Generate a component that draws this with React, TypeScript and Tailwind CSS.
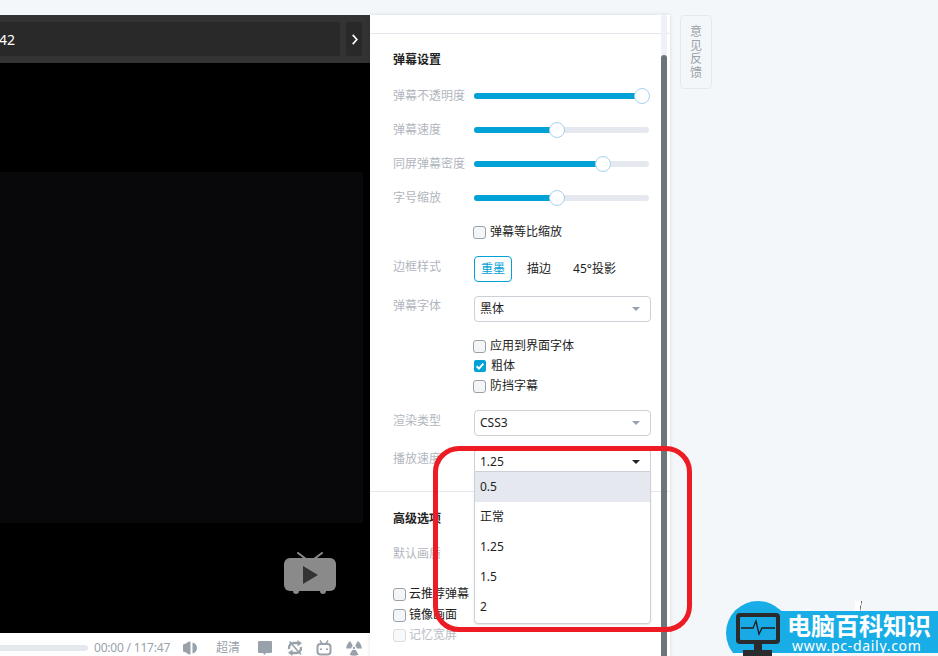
import React from "react";

const font = { fontFamily: '"Noto Sans","Noto Sans CJK SC",sans-serif' };

function Slider({ label, pct }: { label: string; pct: number }) {
  return (
    <div className="flex h-[34px] items-center">
      <span className="w-[81px] shrink-0 text-[12px] text-[#b1b6be]">{label}</span>
      <div className="relative h-[6px] w-[175px] shrink-0 rounded-full bg-[#e5e9ef]">
        <div className="h-full rounded-full bg-[#00a1d6]" style={{ width: `${pct}%` }} />
        <div
          className="absolute top-[-5px] ml-[-8px] h-[16px] w-[16px] rounded-full border border-[#a5d4ec] bg-white"
          style={{ left: `${pct}%` }}
        />
      </div>
    </div>
  );
}

function Check({ label, checked, muted, tight }: { label: string; checked?: boolean; muted?: boolean; tight?: boolean }) {
  return (
    <div className={tight ? "flex h-[20px] items-center gap-[3px]" : "flex h-[20px] items-center gap-[4px]"}>
      <span
        className={
          checked
            ? "ml-px mr-px flex h-[12px] w-[12px] items-center justify-center rounded-[2px] bg-[#00a1d6]"
            : muted
              ? "h-[13px] w-[13px] rounded-[3px] border border-[#d9dce1] bg-[#f8f9fa]"
              : "h-[13px] w-[13px] rounded-[3px] border border-[#99a2aa] bg-[#f4f5f7]"
        }
      >
        {checked && (
          <svg viewBox="0 0 12 12" className="h-[12px] w-[12px]">
            <path d="M2.6 6.2 5 8.6 9.4 3.6" fill="none" stroke="#fff" strokeWidth="2" />
          </svg>
        )}
      </span>
      <span className={muted ? "text-[12px] text-[#b9bdc3]" : "text-[12px] text-[#222]"}>{label}</span>
    </div>
  );
}

function Select({ label, value }: { label: string; value: string }) {
  return (
    <div className="mt-[14px] flex items-start">
      <span className="mt-px h-[18px] w-[81px] shrink-0 text-[12px] leading-[18px] text-[#b1b6be]">{label}</span>
      <div className="flex h-[26px] w-[177px] shrink-0 items-center justify-between rounded-[4px] border border-[#ccd0d7] pl-[5px] pr-[10px] text-[12px] text-[#222]">
        <span>{value}</span>
        <span className="h-0 w-0 border-x-[4px] border-t-[4px] border-x-transparent border-t-[#99a2aa]" />
      </div>
    </div>
  );
}

function TvLogo() {
  return (
    <svg viewBox="0 0 52 42" className="h-[42px] w-[52px]">
      <path d="M14 1 22 7M38 1 30 7" stroke="#8a8a8a" strokeWidth="2" strokeLinecap="round" />
      <rect x="0" y="6" width="52" height="33" rx="6" fill="#8a8a8a" />
      <circle cx="12" cy="39" r="3" fill="#8a8a8a" />
      <circle cx="39" cy="39" r="3" fill="#8a8a8a" />
      <path d="M19 14 34 23 19 32Z" fill="#333" />
    </svg>
  );
}

function Controls() {
  return (
    <div className="flex h-[23px] items-center bg-white pt-[6px] text-[12px] text-[#99a2aa]">
      <div className="h-[6px] w-[88px] rounded-r-full bg-[#e5e9ef]" />
      <span className="ml-[6px] w-[80px] whitespace-nowrap tracking-[-0.2px]">00:00 / 117:47</span>
      <svg viewBox="0 0 16 16" className="ml-[8px] h-[16px] w-[16px]" fill="#99a2aa">
        <path d="M8.500 1.500V14.500C5 14.500 4.500 12 2.500 12 1.500 12 1 11.500 1 10.500V5.500C1 4.500 1.500 4 2.500 4 4.500 4 5 1.500 8.500 1.500Z" />
        <path d="M10.500 2.500C13.500 3 15 5.500 15 8S13.500 13 10.500 13.500Z" />
      </svg>
      <span className="ml-[18px]">超清</span>
      <svg viewBox="0 0 16 16" className="ml-[17px] h-[16px] w-[16px]">
        <path d="M2 1h12a1 1 0 0 1 1 1v10a1 1 0 0 1-1 1H9l-1.500 2L6 13H2a1 1 0 0 1-1-1V2a1 1 0 0 1 1-1Z" fill="#99a2aa" />
      </svg>
      <svg viewBox="0 0 16 16" className="ml-[14px] h-[16px] w-[16px]" fill="none" stroke="#99a2aa">
        <path d="M2 9C1.500 5 4 3 7 3H11" strokeWidth="2.400" />
        <path d="M10.500 0 15 3.200 10.500 6.500Z" fill="#99a2aa" stroke="none" />
        <path d="M14 7C14.500 11 12 13 9 13H5" strokeWidth="2.400" />
        <path d="M5.500 9.500 1 12.800 5.500 16Z" fill="#99a2aa" stroke="none" />
        <path d="M2.500 1.500 14 14.500" strokeWidth="1.600" />
      </svg>
      <svg viewBox="0 0 16 16" className="ml-[13px] h-[16px] w-[16px]" fill="none" stroke="#99a2aa" strokeWidth="2">
        <rect x="1.500" y="4" width="13" height="10.500" rx="3" />
        <path d="M4 0.500 6 3.500M12 0.500 10 3.500" strokeWidth="1.500" />
        <path d="M5 8.500v1.500M11 8.500v1.500" strokeWidth="2" />
      </svg>
      <svg viewBox="0 0 16 16" className="ml-[14px] h-[16px] w-[16px]" fill="#99a2aa">
        <path d="M4.200 1 6.800 5.800 4.800 8.500H0.200C0.200 5.500 1.800 2.500 4.200 1Z" />
        <path d="M11.800 1 9.200 5.800 11.200 8.500H15.800C15.800 5.500 14.200 2.500 11.800 1Z" />
        <path d="M6.200 10 9.800 10 12.500 14.800C10 16.200 6 16.200 3.500 14.800Z" />
        <circle cx="8" cy="8" r="1.200" />
      </svg>
    </div>
  );
}

function Brand() {
  return (
    <div className="absolute left-[726px] top-[601px] h-[55px] w-[212px]">
      <div className="absolute left-0 top-0 h-[64px] w-[64px] rounded-full bg-[#18ade6] [clip-path:inset(0_0_12px_0)]" />
      <div className="absolute left-[32px] right-0 top-[10px] h-[42px] bg-[#18ade6]" />
      <svg viewBox="0 0 44 43" className="absolute left-[10px] top-[12px] h-[43px] w-[44px]">
        <rect x="0" y="0" width="44" height="31" rx="4" fill="#2b2a2c" />
        <rect x="4" y="4" width="36" height="23" rx="1" fill="#19a9e5" />
        <path d="M5 15h12l3-7 3 13 3-6h13" fill="none" stroke="#1c1c1e" strokeWidth="1.300" />
        <rect x="18" y="31" width="8" height="6" fill="#2b2a2c" />
        <rect x="7" y="37" width="29" height="6" fill="#2b2a2c" />
      </svg>
      <div className="absolute left-[61px] top-[9px] whitespace-nowrap text-[24px] font-bold leading-[32px] text-white">
        电脑百科知识
      </div>
      <div className="absolute left-[66px] top-[38px] whitespace-nowrap text-[14px] leading-[13px] tracking-[0.7px] text-white">
        www.pc-daily.com
      </div>
    </div>
  );
}

export default function App() {
  return (
    <div className="relative flex h-[656px] w-[938px] overflow-hidden bg-[#f4f7f9] pt-[15px]" style={font}>
      <div className="flex w-[370px] shrink-0 flex-col">
        <div className="flex h-[48px] items-center gap-[6px] bg-[#333] pr-[8px]">
          <div className="flex h-[34px] flex-1 items-center bg-[#292929] text-[14px] text-white">
            <span className="-ml-px">42</span>
          </div>
          <div className="flex h-[34px] w-[16px] items-center justify-center rounded-[3px] bg-[#292929]">
            <svg viewBox="0 0 8 12" className="ml-px h-[11px] w-[8px]">
              <path d="M1.500 1 6 6 1.500 11" fill="none" stroke="#fff" strokeWidth="1.800" />
            </svg>
          </div>
        </div>
        <div className="flex h-[570px] flex-col bg-black pt-[109px]">
          <div className="h-[351px] w-[363px] bg-[#08070a]" />
          <div className="ml-[284px] mt-[29px]">
            <TvLogo />
          </div>
        </div>
        <Controls />
      </div>

      <div className="relative w-[300px] shrink-0 bg-white shadow-[0_0_4px_rgba(0,0,0,0.12)]">
        <div className="h-[19px] border-b border-[#e5e9ef]" />
        <div className="pl-[23px]">
          <div className="mt-[16px] text-[12px] font-bold leading-[20px] text-[#222]">弹幕设置</div>
          <div className="mt-[9px]">
            <Slider label="弹幕不透明度" pct={96} />
            <Slider label="弹幕速度" pct={47.5} />
            <Slider label="同屏弹幕密度" pct={73.6} />
            <Slider label="字号缩放" pct={47.5} />
          </div>
          <div className="ml-[80px] flex h-[34px] items-center">
            <Check label="弹幕等比缩放" />
          </div>
          <div className="mt-[7px] flex items-start">
            <span className="mt-[2px] h-[18px] w-[81px] shrink-0 text-[12px] leading-[18px] text-[#b1b6be]">边框样式</span>
            <div className="flex h-[26px] items-center text-[12px] text-[#222]">
              <span className="flex h-[26px] w-[38px] items-center justify-center rounded-[4px] border border-[#00a1d6] text-[#00a1d6]">重墨</span>
              <span className="ml-[15px]">描边</span>
              <span className="ml-[22px]">45°投影</span>
            </div>
          </div>
          <Select label="弹幕字体" value="黑体" />
          <div className="ml-[80px] mt-[14px]">
            <Check label="应用到界面字体" />
            <Check label="粗体" checked />
            <Check label="防挡字幕" />
          </div>
          <div className="mt-[14px] flex items-start">
            <span className="mt-[2px] h-[18px] w-[81px] shrink-0 text-[12px] leading-[18px] text-[#b1b6be]">渲染类型</span>
            <div className="flex h-[26px] w-[177px] shrink-0 items-center justify-between rounded-[4px] border border-[#ccd0d7] pl-[5px] pr-[10px] text-[12px] text-[#222]">
              <span>CSS3</span>
              <span className="h-0 w-0 border-x-[4px] border-t-[4px] border-x-transparent border-t-[#99a2aa]" />
            </div>
          </div>
          <div className="relative z-10 mt-[13px] flex items-start">
            <span className="mt-px h-[18px] w-[81px] shrink-0 text-[12px] leading-[18px] text-[#b1b6be]">播放速度</span>
            <div className="relative flex h-[22px] w-[177px] shrink-0 items-center justify-between rounded-t-[4px] border-x border-t border-[#ccd0d7] bg-white pl-[5px] pr-[10px] pt-[3px] text-[12px] text-[#222]">
              <span>1.25</span>
              <span className="h-0 w-0 border-x-[4px] border-t-[4px] border-x-transparent border-t-[#222]" />
              <div className="absolute left-[-1px] top-[21px] w-[177px] rounded-b-[4px] border border-[#ccd0d7] bg-white pb-[1px] shadow-[0_1px_2px_rgba(0,0,0,0.1)]">
                {["0.5", "正常", "1.25", "1.5", "2"].map((o, i) => (
                  <div
                    key={o}
                    className={
                      i === 0
                        ? "flex h-[30px] items-center bg-[#e5e9ef] pl-[5px]"
                        : "flex h-[30px] items-center pl-[5px]"
                    }
                  >
                    {o}
                  </div>
                ))}
              </div>
            </div>
          </div>
        </div>
        <div className="mt-[20px] border-t border-[#e5e9ef]" />
        <div className="pl-[23px]">
          <div className="mt-[17px] text-[12px] font-bold leading-[20px] text-[#222]">高级选项</div>
          <div className="mt-[16px] text-[12px] leading-[18px] text-[#b1b6be]">默认画质</div>
          <div className="mt-[21px]">
            <Check label="云推荐弹幕" tight />
            <div className="mt-px">
              <Check label="镜像画面" tight />
            </div>
            <Check label="记忆宽屏" muted tight />
          </div>
        </div>
        <div className="absolute bottom-0 right-[3px] top-0 w-[6px] rounded-t-full bg-[#eef2f8]">
          <div className="absolute bottom-0 left-0 right-0 top-[40px] rounded-t-full bg-[#6d757a]" />
        </div>
      </div>

      <div className="ml-[10px] flex h-[74px] w-[32px] items-center justify-center rounded-[4px] border border-[#e5e9ef]">
        <div className="w-[12px] break-all text-[12px] leading-[13.500px] text-[#99a2aa]">意见反馈</div>
      </div>

      <Brand />
      <div className="absolute left-[855px] top-[601px] h-[10px] w-[7px] bg-[linear-gradient(100deg,#fff_70%,#555_75%,#fff_85%)]" />
      <div className="pointer-events-none absolute left-[433px] top-[446px] z-20 h-[186px] w-[259px] rounded-[26px] border-[5px] border-[#ed1c24]" />
    </div>
  );
}
